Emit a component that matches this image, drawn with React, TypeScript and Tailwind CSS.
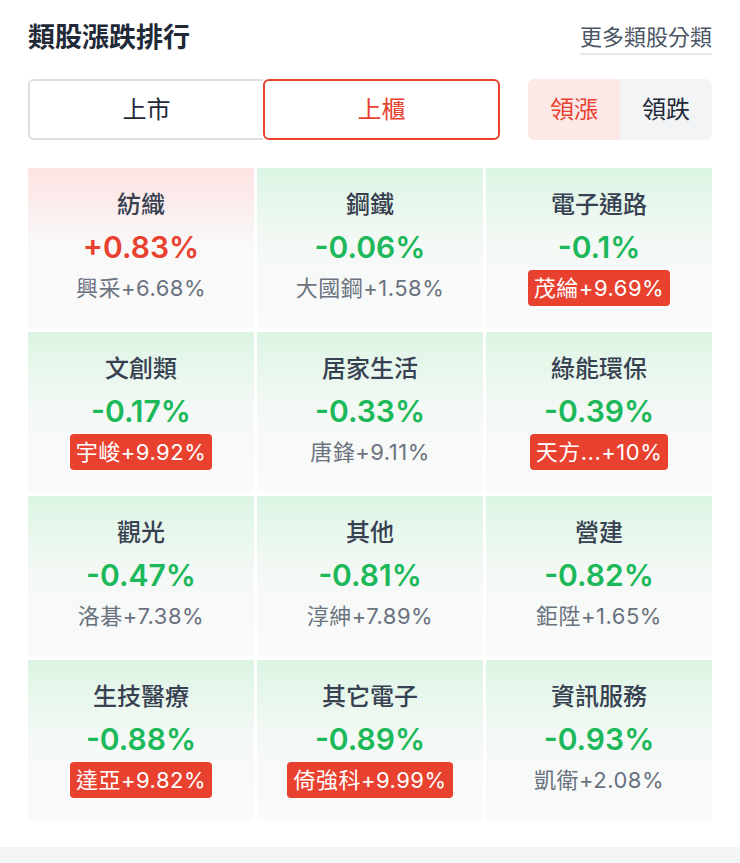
import React from "react";

type Sector = {
  name: string;
  change: string;
  up: boolean;
  lead: string;
  hot: boolean;
};

const sectors: Sector[] = [
  { name: "紡織", change: "+0.83%", up: true, lead: "興采+6.68%", hot: false },
  { name: "鋼鐵", change: "-0.06%", up: false, lead: "大國鋼+1.58%", hot: false },
  { name: "電子通路", change: "-0.1%", up: false, lead: "茂綸+9.69%", hot: true },
  { name: "文創類", change: "-0.17%", up: false, lead: "宇峻+9.92%", hot: true },
  { name: "居家生活", change: "-0.33%", up: false, lead: "唐鋒+9.11%", hot: false },
  { name: "綠能環保", change: "-0.39%", up: false, lead: "天方...+10%", hot: true },
  { name: "觀光", change: "-0.47%", up: false, lead: "洛碁+7.38%", hot: false },
  { name: "其他", change: "-0.81%", up: false, lead: "淳紳+7.89%", hot: false },
  { name: "營建", change: "-0.82%", up: false, lead: "鉅陞+1.65%", hot: false },
  { name: "生技醫療", change: "-0.88%", up: false, lead: "達亞+9.82%", hot: true },
  { name: "其它電子", change: "-0.89%", up: false, lead: "倚強科+9.99%", hot: true },
  { name: "資訊服務", change: "-0.93%", up: false, lead: "凱衛+2.08%", hot: false },
];

const SectorCell = ({ s }: { s: Sector }) => (
  <div
    className={`flex h-[160px] flex-col items-center pt-[22px] ${
      s.up
        ? "bg-gradient-to-b from-[#fde3e3] via-[#f9f9f9] to-[#fafafa]"
        : "bg-gradient-to-b from-[#dcf5e4] via-[#f5f9f6] to-[#fafafa]"
    }`}
  >
    <div className="text-[24px] leading-[30px] font-medium text-[#374151]">{s.name}</div>
    <div
      className={`mt-[9px] text-[30px] leading-[36px] font-semibold ${
        s.up ? "text-[#e8412f]" : "text-[#1cb85a]"
      }`}
    >
      {s.change}
    </div>
    {s.hot ? (
      <div className="mt-[5px] rounded-[4px] bg-[#e8412f] px-[6px] text-[22px] leading-[36px] tracking-[0.5px] text-white">
        {s.lead}
      </div>
    ) : (
      <div className="mt-[5px] text-[22px] leading-[36px] tracking-[0.5px] text-[#6b7280]">
        {s.lead}
      </div>
    )}
  </div>
);

export default function App() {
  return (
    <div
      className="min-h-[863px] bg-white"
      style={{ fontFamily: '"Inter", "Noto Sans CJK TC", sans-serif' }}
    >
      <div className="px-7 pt-5 pb-[27px]">
        <div className="flex items-center justify-between">
          <h2 className="text-[27px] leading-[36px] font-bold text-[#1f2937]">類股漲跌排行</h2>
          <a className="border-b-2 border-gray-200 text-[22px] leading-[32px] text-[#4b5563]">
            更多類股分類
          </a>
        </div>

        <div className="mt-[23px] flex gap-7">
          <div className="flex h-[61px] flex-1">
            <button className="flex-1 rounded-l-md border-2 border-r-0 border-[#dedede] text-[24px] text-[#1f2937]">
              上市
            </button>
            <button className="flex-1 rounded-md border-2 border-[#e8412f] text-[24px] text-[#e8412f]">
              上櫃
            </button>
          </div>
          <div className="flex h-[61px] w-[184px] overflow-hidden rounded-md">
            <button className="flex-1 bg-[#fde8e8] text-[24px] text-[#e8412f]">領漲</button>
            <button className="flex-1 bg-[#f3f4f6] text-[24px] text-[#1f2937]">領跌</button>
          </div>
        </div>

        <div className="mt-7 grid grid-cols-3 gap-x-[3px] gap-y-[4px]">
          {sectors.map((s) => (
            <SectorCell key={s.name} s={s} />
          ))}
        </div>
      </div>
      <div className="h-[20px] bg-[#f3f4f6]" />
    </div>
  );
}
